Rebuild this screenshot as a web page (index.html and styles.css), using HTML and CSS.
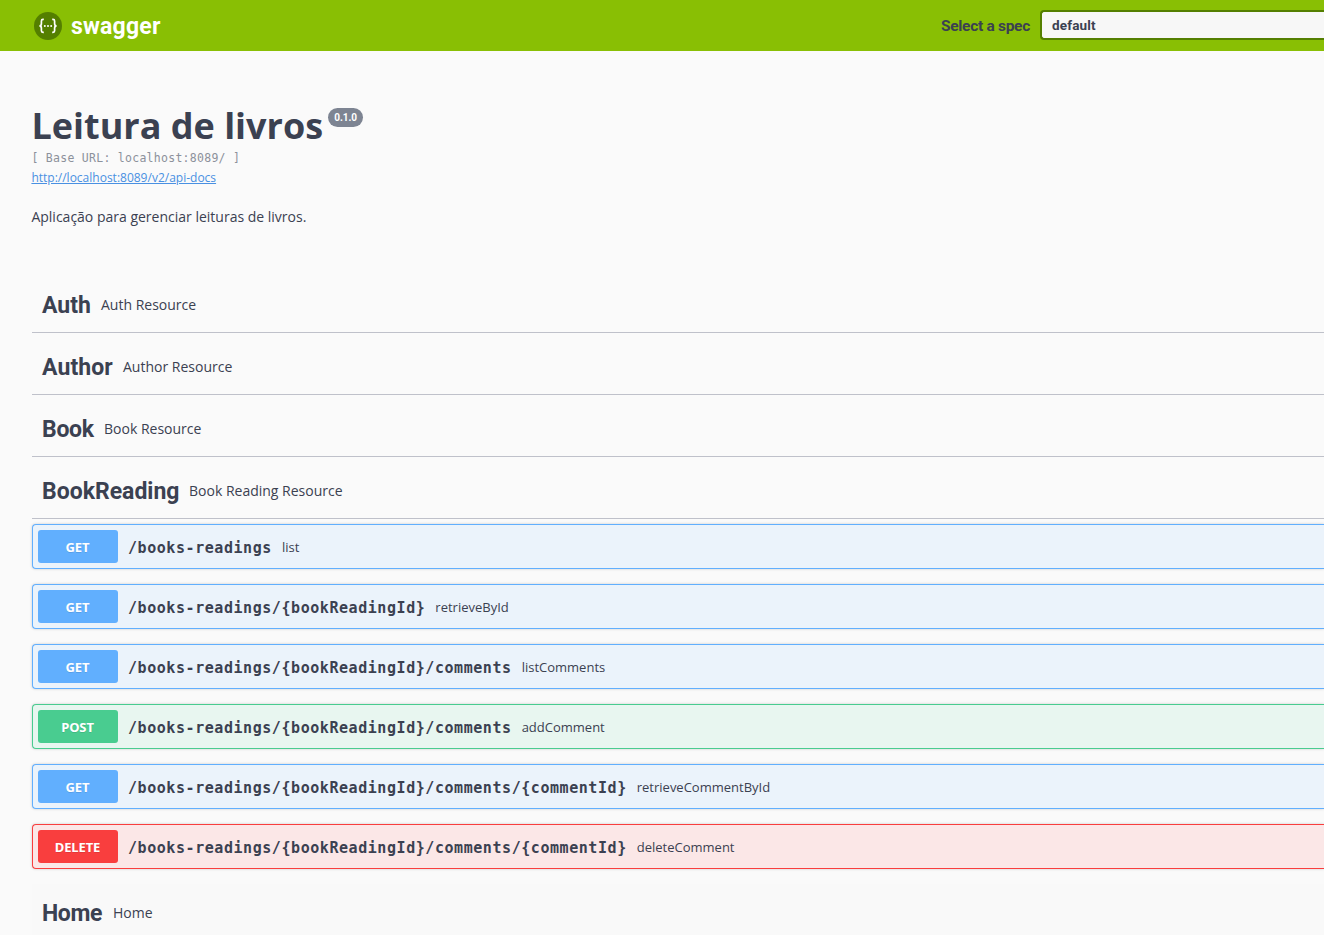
FILE: index.html
```html
<!DOCTYPE html>
<html lang="pt-BR">
<head>
<meta charset="utf-8">
<title>Swagger UI</title>
<link rel="stylesheet" href="styles.css">
</head>
<body>
<header class="topbar">
  <div class="brand">
    <svg class="brand-icon" width="28" height="28" viewBox="0 0 28 28" fill="none">
      <circle cx="14" cy="14" r="14" fill="#547f00"/>
      <path d="M9.8 7.4H9Q7.4 7.4 7.4 9V11.4Q7.4 13.8 5.4 13.8Q7.4 13.8 7.4 16.2V18.8Q7.4 20.4 9 20.4H9.8M18.2 7.4H19Q20.6 7.4 20.6 9V11.4Q20.6 13.8 22.6 13.8Q20.6 13.8 20.6 16.2V18.8Q20.6 20.4 19 20.4H18.2" stroke="#fff" stroke-width="1.7"/>
      <g fill="#fff"><circle cx="10.8" cy="14" r="1"/><circle cx="14" cy="14" r="1"/><circle cx="17.2" cy="14" r="1"/></g>
    </svg>
    <span class="brand-name">swagger</span>
  </div>
  <div class="spec">
    <span class="spec-label">Select a spec</span>
    <div class="spec-select">default</div>
  </div>
</header>
<main class="content">
  <section class="info">
    <div class="title-row"><h1 class="title">Leitura de livros</h1><span class="version">0.1.0</span></div>
    <div class="base-url">[ Base URL: localhost:8089/ ]</div>
    <a class="docs-link" href="#">http://localhost:8089/v2/api-docs</a>
    <p class="description">Aplicação para gerenciar leituras de livros.</p>
  </section>
  <section class="tag"><h2 class="tag-name auth">Auth</h2><span class="tag-text">Auth Resource</span></section>
  <section class="tag"><h2 class="tag-name author">Author</h2><span class="tag-text">Author Resource</span></section>
  <section class="tag"><h2 class="tag-name book">Book</h2><span class="tag-text">Book Resource</span></section>
  <section class="tag"><h2 class="tag-name reading">BookReading</h2><span class="tag-text">Book Reading Resource</span></section>
  <div class="operations">
    <div class="op get"><span class="method">GET</span><span class="path">/books-readings</span><span class="summary">list</span></div>
    <div class="op get"><span class="method">GET</span><span class="path">/books-readings/{bookReadingId}</span><span class="summary">retrieveById</span></div>
    <div class="op get"><span class="method">GET</span><span class="path">/books-readings/{bookReadingId}/comments</span><span class="summary">listComments</span></div>
    <div class="op post"><span class="method">POST</span><span class="path">/books-readings/{bookReadingId}/comments</span><span class="summary">addComment</span></div>
    <div class="op get"><span class="method">GET</span><span class="path">/books-readings/{bookReadingId}/comments/{commentId}</span><span class="summary">retrieveCommentById</span></div>
    <div class="op delete"><span class="method">DELETE</span><span class="path">/books-readings/{bookReadingId}/comments/{commentId}</span><span class="summary">deleteComment</span></div>
  </div>
  <section class="tag hovered"><h2 class="tag-name home">Home</h2><span class="tag-text">Home</span></section>
</main>
</body>
</html>
```

FILE: styles.css
```css
* { box-sizing: border-box; }
body {
  margin: 0;
  height: 935px;
  overflow: hidden;
  background: #fafafa;
  color: #3b4151;
  font-family: "Open Sans", sans-serif;
}
.topbar {
  display: flex;
  align-items: center;
  justify-content: space-between;
  height: 51px;
  padding-left: 34px;
  background: #89bf04;
}
.brand { display: flex; align-items: center; gap: 9px; }
.brand-icon { display: block; margin-top: 1px; }
.brand-name {
  padding-top: 2px;
  color: #fff;
  font: bold 23px/28px Roboto, sans-serif;
  letter-spacing: 0.2px;
}
.spec { display: flex; align-items: center; width: 383px; height: 51px; padding-bottom: 2px; }
.spec-label {
  width: 99px;
  flex: none;
  margin-top: 2px;
  white-space: nowrap;
  font: bold 15.5px/24px Roboto, sans-serif;
  letter-spacing: -0.3px;
}
.spec-select {
  flex: 1;
  height: 30px;
  padding-left: 10px;
  border: 2px solid #547f00;
  border-right: 0;
  border-radius: 4px 0 0 4px;
  background: #f7f7f7;
  font: bold 13.5px/26px Roboto, sans-serif;
  letter-spacing: 0.15px;
}
.content { padding-left: 32px; }
.info { height: 224px; margin-left: -0.6px; padding-top: 50px; }
.title-row { display: flex; align-items: flex-start; gap: 5px; height: 49px; }
.title { margin: 0; font-size: 36px; line-height: 49px; font-weight: bold; }
.version {
  width: 35px;
  height: 19px;
  margin-top: 7px;
  border-radius: 10px;
  background: #7d8492;
  color: #fff;
  font: bold 10px/19px Roboto, sans-serif;
  letter-spacing: -0.1px;
  text-align: center;
}
.base-url {
  color: #8c919b;
  font: 11.5px/17px "DejaVu Sans Mono", monospace;
  letter-spacing: 0.277px;
}
.docs-link { display: block; margin-top: 1px; color: #4990e2; font-size: 12px; line-height: 20px; }
.description { margin: 18px 0 0; font-size: 14px; line-height: 21px; }
.tag {
  display: flex;
  align-items: center;
  gap: 10px;
  height: 57px;
  margin-bottom: 5px;
  padding: 2px 0 0 10px;
  border-bottom: 1px solid #bfc1ca;
}
.info + .tag { margin-top: 1px; }
.tag-name {
  flex: none;
  margin: 0;
  padding-top: 2px;
  white-space: nowrap;
  font: bold 23px/32px Roboto, sans-serif;
}
.auth { width: 49px; }
.author { width: 71px; letter-spacing: 0.1px; }
.book { width: 52px; letter-spacing: -0.3px; }
.reading { width: 137px; }
.home { width: 61px; letter-spacing: -0.4px; }
.tag-text { font-size: 14px; line-height: 20px; }
.operations { display: flex; flex-direction: column; gap: 15px; }
.op {
  display: flex;
  align-items: center;
  height: 45px;
  padding-left: 5px;
  border: 1px solid;
  border-right: 0;
  border-radius: 4px 0 0 4px;
  box-shadow: 0 0 3px rgba(0, 0, 0, .19);
}
.method {
  width: 80px;
  height: 33px;
  padding-right: 1px;
  border-radius: 3px;
  color: #fff;
  font: bold 13px/34px "Noto Sans", sans-serif;
  letter-spacing: -0.1px;
  text-align: center;
  text-shadow: 0 1px 0 rgba(0, 0, 0, .1);
}
.path {
  padding: 2px 10px 0;
  font: bold 15px/20px "DejaVu Sans Mono", monospace;
  letter-spacing: 0.56px;
}
.summary { font-size: 13px; line-height: 20px; }
.get { border-color: #61affe; background: #ebf3fb; }
.get .method { background: #61affe; }
.post { border-color: #49cc90; background: #e8f6f0; }
.post .method { background: #49cc90; }
.delete { border-color: #f93e3e; background: #fbe7e7; }
.delete .method { background: #f93e3e; }
.hovered { margin-top: 15px; background: #f9f9f9; }
```
